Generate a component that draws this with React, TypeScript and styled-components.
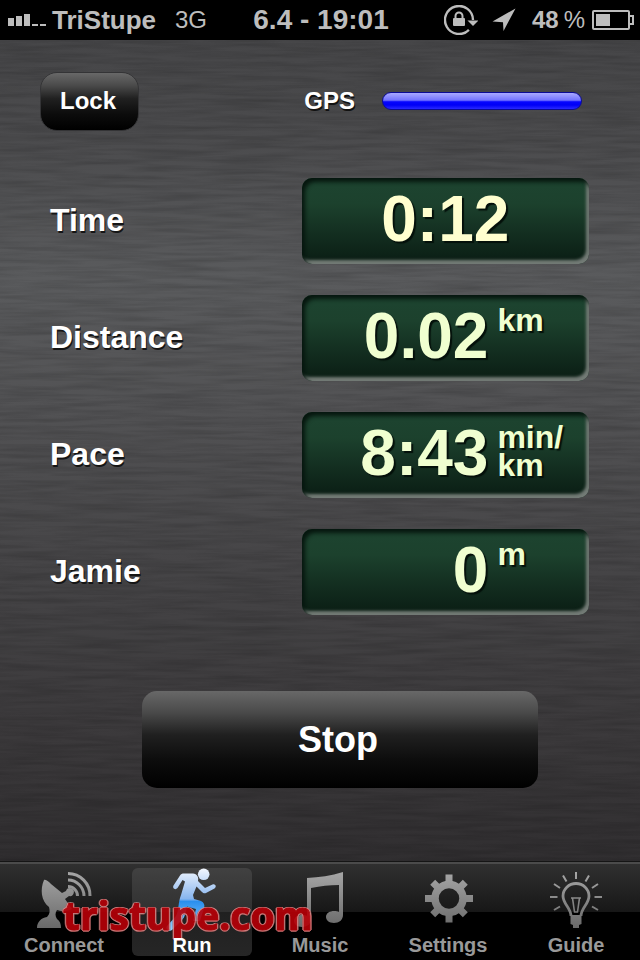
import React from "react";
import styled, { createGlobalStyle, css } from "styled-components";

const GlobalStyle = createGlobalStyle`
  * { box-sizing: border-box; }
  body { margin: 0; background: #000; }
  button { font: inherit; color: inherit; border: 0; padding: 0; cursor: pointer; }
`;

const brushed = `url("data:image/svg+xml,${encodeURIComponent(
  `<svg xmlns="http://www.w3.org/2000/svg" width="640" height="824"><filter id="g" x="0" y="0" width="100%" height="100%"><feTurbulence type="fractalNoise" baseFrequency="0.014 0.22" numOctaves="3" seed="7"/><feColorMatrix values="0 0 0 0 0  0 0 0 0 0  0 0 0 0 0  1 0 0 0 -0.35"/></filter><rect width="640" height="824" filter="url(#g)" opacity="0.28"/></svg>`
)}")`;

const Screen = styled.div`
  min-height: 100vh;
  display: flex;
  flex-direction: column;
  font-family: "Liberation Sans", Arial, sans-serif;
  font-weight: bold;
  color: #fff;
`;

const StatusBar = styled.header`
  height: 40px;
  padding: 0 6px 0 8px;
  display: grid;
  grid-template-columns: 1fr auto 1fr;
  align-items: center;
  background: #000;
  color: #bdbdbd;
  font-size: 26px;
  line-height: 40px;
`;

const StatusGroup = styled.div<{ $end?: boolean }>`
  display: flex;
  align-items: center;
  white-space: nowrap;
  ${(p) => p.$end && css`justify-content: flex-end;`}
`;

const Carrier = styled.span`
  margin: 0 19px 0 6px;
`;

const Network = styled.span`
  font-size: 24px;
  font-weight: normal;
`;

const Clock = styled.time`
  font-size: 28px;
`;

const StatusIcons = styled.span`
  display: flex;
  align-items: center;
  gap: 14px;
`;

const Percent = styled.span`
  font-size: 24px;
  margin: 0 7px 0 16px;
  display: flex;
  gap: 5px;
`;

const PercentSign = styled.span`
  font-weight: normal;
`;

const Main = styled.main`
  flex: 1;
  display: flex;
  flex-direction: column;
  padding-top: 32px;
  background: ${brushed},
    linear-gradient(#464648 0%, #4b4b4d 12%, #5a5b5d 29%, #525254 45%, #454446 65%, #3b393b 85%, #302e30 100%);
`;

const TopRow = styled.div`
  display: flex;
  align-items: center;
  justify-content: space-between;
  padding: 0 58px 0 40px;
  font-size: 24px;
`;

const GlossButton = styled.button<{ $size: "small" | "large" }>`
  background: linear-gradient(#686868 0%, #4a4a4a 22%, #202020 45%, #0c0c0c 72%, #000 100%);
  color: #fff;
  ${(p) =>
    p.$size === "small"
      ? css`
          width: 99px;
          height: 59px;
          padding: 0 3px 2px 0;
          border: 1px solid #343436;
          border-radius: 17px;
        `
      : css`
          width: 100%;
          height: 97px;
          padding-right: 4px;
          border-radius: 15px;
          font-size: 36px;
        `}
`;

const Signal = styled.div`
  display: flex;
  align-items: center;
  gap: 27px;
  padding-bottom: 2px;
  text-shadow: 1px 2px 0 #111;
`;

const SignalBar = styled.div`
  width: 200px;
  height: 18px;
  border: 1px solid #0b0b96;
  border-radius: 9px;
  background: linear-gradient(#a9a9ff 0%, #7373ff 45%, #0505ff 55%, #0000f6 75%, #2929ff 100%);
`;

const Readings = styled.dl`
  margin: 47px 51px 76px 50px;
  display: grid;
  gap: 31px;
`;

const Reading = styled.div`
  display: grid;
  grid-template-columns: 7fr 8fr;
  align-items: center;
`;

const ReadingLabel = styled.dt`
  font-size: 32px;
  line-height: 36px;
  padding-bottom: 3px;
  text-shadow: 1px 2px 0 #151515;
`;

const Display = styled.dd<{ $unit: boolean }>`
  margin: 0;
  height: 86px;
  display: grid;
  grid-template-columns: ${(p) => (p.$unit ? "65% 1fr" : "1fr")};
  column-gap: 9px;
  border-radius: 10px;
  background: linear-gradient(#1d4430 0%, #1c412d 30%, #132e20 65%, #0b1f15 95%);
  box-shadow: inset 3px 4px 4px #06160e, inset -3px -4px 3px #737b76;
  color: ${(p) => (p.$unit ? "#f0ffd0" : "#ffffcf")};
  text-align: ${(p) => (p.$unit ? "right" : "center")};
  text-shadow: 2px 2px 1px #04100a;
`;

const Value = styled.span`
  font-size: 64px;
  line-height: 82px;
`;

const Unit = styled.span`
  padding-top: 11px;
  font-size: 32px;
  line-height: 28px;
  text-align: left;
  white-space: pre-line;
`;

const StopArea = styled.div`
  padding: 0 102px 74px 142px;
`;

const TabBar = styled.nav`
  position: relative;
  display: grid;
  grid-template-columns: repeat(5, 1fr);
  border-top: 2px solid #4b4b4b;
  box-shadow: 0 -1px 0 #151515;
  background: linear-gradient(#303030 0, #171717 48px, #000 48px, #000 100%);
  color: #999;
`;

const Tab = styled.button<{ $active?: boolean }>`
  margin: 4px;
  height: 88px;
  display: flex;
  flex-direction: column;
  align-items: center;
  justify-content: space-between;
  border-radius: 6px;
  background: ${(p) =>
    p.$active ? "linear-gradient(#414141 0, #303030 44px, #202020 44px, #262626 100%)" : "none"};
  color: ${(p) => (p.$active ? "#fff" : "#999")};
  font-size: 20px;
  line-height: 22px;
`;

const TabLabel = styled.span`
  position: relative;
  z-index: 1;
`;

const Watermark = styled.span`
  position: absolute;
  left: 63px;
  top: 35px;
  font-family: "Open Sans", "Noto Sans", sans-serif;
  font-size: 39px;
  line-height: 32px;
  color: #b80008;
  -webkit-text-stroke: 1px #b80008;
  text-shadow: -1px -1px 0 #e09090, 1px -1px 0 #e09090, -1px 1px 0 #e09090, 1px 1px 0 #e09090,
    -2px 0 0 #b06060, 2px 0 0 #b06060, 0 2px 0 #b06060;
  opacity: 0.9;
  pointer-events: none;
`;

const SignalIcon = () => (
  <svg width="38" height="14" viewBox="0 0 38 14" fill="#bdbdbd" aria-hidden="true">
    <path d="M0 5h6v8H0zM8 3h6v10H8zM16 1h6v12h-6zM24 11h6v2h-6zM32 11h6v2h-6z" />
  </svg>
);

const RotationLockIcon = () => (
  <svg width="34" height="30" viewBox="0 0 34 30" fill="none" stroke="#bdbdbd" aria-hidden="true">
    <path d="M24.9 24.9A14 14 0 1 1 29 15" strokeWidth="2.4" />
    <path d="M23.5 15.5h11L29 21z" fill="#bdbdbd" stroke="none" />
    <rect x="9" y="13" width="12" height="8" rx="1" fill="#bdbdbd" stroke="none" />
    <path d="M11.5 14v-3a3.5 3.5 0 0 1 7 0v3" strokeWidth="2" />
  </svg>
);

const LocationIcon = () => (
  <svg width="24" height="24" viewBox="0 0 24 24" fill="#bdbdbd" aria-hidden="true">
    <path d="M23.5 0.5 11.5 23 11 14.300 0.5 13.500z" />
  </svg>
);

const BatteryIcon = () => (
  <svg width="42" height="20" viewBox="0 0 42 20" fill="none" stroke="#bdbdbd" strokeWidth="2" aria-hidden="true">
    <rect x="1" y="1" width="36" height="18" rx="1" />
    <path d="M38 6h3v8h-3" />
    <rect x="4" y="4" width="14" height="12" fill="#bdbdbd" stroke="none" />
  </svg>
);

const TabIcon = ({ children }: { children: React.ReactNode }) => (
  <svg width="64" height="64" viewBox="0 0 64 64" aria-hidden="true">
    <defs>
      <linearGradient id="steel" gradientUnits="userSpaceOnUse" x1="0" y1="4" x2="0" y2="60">
        <stop offset="0" stopColor="#a6a6a6" />
        <stop offset="1" stopColor="#696969" />
      </linearGradient>
      <linearGradient id="ice" gradientUnits="userSpaceOnUse" x1="0" y1="0" x2="0" y2="62">
        <stop offset="0" stopColor="#f4f8ff" />
        <stop offset="0.5" stopColor="#86b4ee" />
        <stop offset="0.54" stopColor="#2a8fee" />
        <stop offset="1" stopColor="#8fd0ff" />
      </linearGradient>
    </defs>
    {children}
  </svg>
);

const ConnectIcon = () => (
  <TabIcon>
    <path
      fill="url(#steel)"
      d="M12 12C14 11 17 14 19 16L30 25L34 23A4 4 0 1 1 37 28L33 31L40 41C34 44 28 43 25 42C23 45 23 48 25 51C28 53 29 56 29 60H5C5 54 9 50 15 49C18 46 18 43 17 39C9 33 8 21 12 12Z"
    />
    <g fill="none" stroke="url(#steel)" strokeWidth="3">
      <path d="M36 18.5A9.5 9.5 0 0 1 45.500 28" />
      <path d="M36 12A16 16 0 0 1 52 28" />
      <path d="M36 5.500A22 22 0 0 1 58 28" />
    </g>
  </TabIcon>
);

const RunIcon = () => (
  <TabIcon>
    <circle cx="43.7" cy="6.300" r="5.800" fill="url(#ice)" />
    <path
      fill="url(#ice)"
      d="M24 5.500H33C37 6 39 9 38 13L45 20L52.500 16.500C55.500 15.500 57 19 54.500 20.500L46 25C44.500 25.600 43 25 42 24L36.500 18.500L33 27L34 31L41 33C44 34.500 45 37 44 40L40 53H33L36 41L27 38.500C26 44 25 49 22 52L12 62C9 64 5 61 7 58L16 48C19 42 18 34 21 27L25 13.500L22.500 12L17.500 20C15.500 22.500 12 20.500 13.500 17.500L20 7.500C21 6 22 5.500 24 5.500Z"
    />
  </TabIcon>
);

const MusicIcon = () => (
  <TabIcon>
    <path
      fill="url(#steel)"
      d="M19 10C31 9 43 8 55 4V47C55 52 51 55 46 55C41 55 38 52 38 49C38 45 42 43 46 43C48 43 50 43 51 44V17C41 17 33 18 23 20V51C23 56 19 59 14 59C9 59 6 56 6 53C6 49 10 47 14 47C16 47 18 47 19 48Z"
    />
  </TabIcon>
);

const SettingsIcon = () => (
  <TabIcon>
    <g fill="none" stroke="url(#steel)">
      <circle cx="33" cy="30.500" r="14" strokeWidth="7.500" />
      <path
        strokeWidth="7"
        d="M33.010 6.500v8M33.010 46.500v8M9 30.510h8M49 30.510h8M16.700 14.200l5 5M44.300 41.800l5 5M16.700 46.800l5-5M44.300 19.200l5-5"
      />
    </g>
  </TabIcon>
);

const GuideIcon = () => (
  <TabIcon>
    <g fill="none" stroke="url(#steel)" strokeWidth="2.800">
      <path d="M27 48C27 40 19 36 19 28A13 12.500 0 0 1 45 28C45 36 37 40 37 48" />
      <path d="M27 30H37M28.500 30 30.500 44H33.500L35.500 30" strokeWidth="1.600" />
      <path
        strokeWidth="2"
        d="M32.010 4V11M19 7.500 22.500 13.500M45 7.500 41.500 13.500M10 16 16 20M54 16 48 20M6 29.010H13.500M50.500 29.010H58M10 42 16 38.500M54 42 48 38.500"
      />
    </g>
    <path d="M26.500 47H37.500V56L35 57V60H29V57L26.500 56Z" fill="url(#steel)" />
  </TabIcon>
);

const readings = [
  { label: "Time", value: "0:12" },
  { label: "Distance", value: "0.02", unit: "km" },
  { label: "Pace", value: "8:43", unit: "min/\nkm" },
  { label: "Jamie", value: "0", unit: "m" },
];

const tabs = [
  { label: "Connect", Icon: ConnectIcon },
  { label: "Run", Icon: RunIcon, active: true },
  { label: "Music", Icon: MusicIcon },
  { label: "Settings", Icon: SettingsIcon },
  { label: "Guide", Icon: GuideIcon },
];

export default function App() {
  return (
    <Screen>
      <GlobalStyle />
      <StatusBar>
        <StatusGroup>
          <SignalIcon />
          <Carrier>TriStupe</Carrier>
          <Network>3G</Network>
        </StatusGroup>
        <Clock>6.4 - 19:01</Clock>
        <StatusGroup $end>
          <StatusIcons>
            <RotationLockIcon />
            <LocationIcon />
          </StatusIcons>
          <Percent>
            48<PercentSign>%</PercentSign>
          </Percent>
          <BatteryIcon />
        </StatusGroup>
      </StatusBar>
      <Main>
        <TopRow>
          <GlossButton type="button" $size="small">Lock</GlossButton>
          <Signal>
            <span id="gps">GPS</span>
            <SignalBar role="meter" aria-labelledby="gps" aria-valuenow={100} aria-valuemin={0} aria-valuemax={100} />
          </Signal>
        </TopRow>
        <Readings>
          {readings.map((r) => (
            <Reading key={r.label}>
              <ReadingLabel>{r.label}</ReadingLabel>
              <Display $unit={!!r.unit}>
                <Value>{r.value}</Value>
                {r.unit && <Unit>{r.unit}</Unit>}
              </Display>
            </Reading>
          ))}
        </Readings>
        <StopArea>
          <GlossButton type="button" $size="large">Stop</GlossButton>
        </StopArea>
      </Main>
      <TabBar>
        {tabs.map(({ label, Icon, active }) => (
          <Tab key={label} type="button" $active={active} aria-current={active ? "page" : undefined}>
            <Icon />
            <TabLabel>{label}</TabLabel>
          </Tab>
        ))}
        <Watermark>tristupe.com</Watermark>
      </TabBar>
    </Screen>
  );
}
